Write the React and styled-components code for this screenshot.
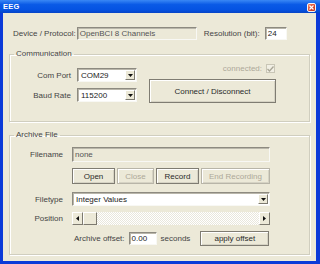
import styled, { createGlobalStyle } from "styled-components";

const Global = createGlobalStyle`
  html, body { margin: 0; padding: 0; background: #ffffff; }
  body { font-family: "Liberation Sans", Arial, sans-serif; }
  * { box-sizing: border-box; }
`;

const Window = styled.div`
  width: 320px;
  height: 264px;
  display: flex;
  flex-direction: column;
  background: #0b3ad8;
`;

const TitleBar = styled.div`
  flex: none;
  height: 13px;
  display: flex;
  align-items: center;
  justify-content: space-between;
  padding: 0 4px 0 3px;
  background: linear-gradient(#3a88f5, #0a5ae6 35%, #0553e2 75%, #0744c6);
  color: #ffffff;
  font-weight: bold;
  font-size: 7.5px;
  letter-spacing: 0.2px;
`;

const CloseBtn = styled.div`
  width: 9px;
  height: 9px;
  margin-top: 1px;
  border: 1px solid #f4f4f4;
  border-radius: 2px;
  background: linear-gradient(135deg, #f08a6c, #d9452a 55%, #c0361c);
  display: flex;
  align-items: center;
  justify-content: center;
`;

const Body = styled.div`
  flex: 1;
  margin: 0 4px 3px 3px;
  background: #ece9d8;
  padding: 14px 6px 0 6px;
  font-size: 8px;
  color: #333333;
`;

const TopRow = styled.div`
  display: flex;
  align-items: center;
  height: 13px;
  margin-left: 4px;
`;

const Label = styled.span`
  white-space: nowrap;
  color: ${(p) => (p.$muted ? "#aca899" : "#444444")};
  margin-right: ${(p) => p.$mr || 0}px;
  margin-left: ${(p) => p.$ml || 0}px;
`;

const TextBox = styled.div`
  width: ${(p) => p.$w}px;
  height: ${(p) => p.$h || 13}px;
  display: flex;
  align-items: center;
  padding-left: 2px;
  border: 1px solid;
  border-color: #8d8a80 #f8f8f4 #f8f8f4 #8d8a80;
  box-shadow: inset 1px 1px 0 #b9b6aa;
  background: ${(p) => (p.$disabled ? "#ece9d8" : "#ffffff")};
  color: ${(p) => (p.$disabled ? "#555555" : "#222222")};
  white-space: nowrap;
  overflow: hidden;
`;

const Group = styled.fieldset`
  margin: ${(p) => p.$mt}px 0 0 0;
  padding: ${(p) => p.$pad};
  border: 1px solid #d0cebf;
  box-shadow: 1px 1px 0 #ffffff, inset 1px 1px 0 #ffffff;
  min-width: 0;
`;

const Legend = styled.legend`
  margin-left: 4px;
  padding: 0 2px;
  font-size: 8px;
  line-height: 10px;
  color: #444444;
`;

const CommLayout = styled.div`
  display: flex;
  align-items: flex-start;
`;

const FormGrid = styled.div`
  display: grid;
  grid-template-columns: ${(p) => p.$cols};
  column-gap: ${(p) => p.$cg}px;
  row-gap: 6px;
  align-items: center;
  margin-top: ${(p) => p.$mt || 0}px;
`;

const RightLabel = styled.span`
  text-align: right;
  white-space: nowrap;
  color: #444444;
  margin-top: ${(p) => p.$mt || 0}px;
`;

const Select = styled.div`
  width: ${(p) => (p.$w ? `${p.$w}px` : "100%")};
  height: ${(p) => p.$h || 14}px;
  margin-top: ${(p) => p.$mt || 0}px;
  display: flex;
  align-items: stretch;
  border: 1px solid;
  border-color: #8d8a80 #f8f8f4 #f8f8f4 #8d8a80;
  box-shadow: inset 1px 1px 0 #b9b6aa;
  background: #ffffff;
  padding: 1px;
`;

const SelectText = styled.span`
  flex: 1;
  display: flex;
  align-items: center;
  padding-left: 2px;
  color: #222222;
  white-space: nowrap;
  overflow: hidden;
`;

const ArrowBtn = styled.div`
  width: ${(p) => p.$w || 10}px;
  flex: none;
  display: flex;
  align-items: center;
  justify-content: center;
  background: #ece9d8;
  border: 1px solid;
  border-color: #ffffff #7d7a70 #7d7a70 #ffffff;
`;

const RightCol = styled.div`
  width: 127px;
  margin-left: 12px;
  display: flex;
  flex-direction: column;
  align-items: flex-end;
`;

const ConnectedRow = styled.div`
  height: 9px;
  display: flex;
  align-items: center;
  gap: 4px;
  margin-right: 1px;
`;

const CheckBox = styled.div`
  width: 9px;
  height: 9px;
  border: 1px solid #c9c6b6;
  background: #f1efe4;
  display: flex;
  align-items: center;
  justify-content: center;
`;

const Button = styled.div`
  width: ${(p) => (p.$w ? `${p.$w}px` : "100%")};
  height: ${(p) => p.$h || 16}px;
  margin-top: ${(p) => p.$mt || 0}px;
  display: flex;
  align-items: center;
  justify-content: center;
  background: #ece9d8;
  border: 1px solid ${(p) => (p.$disabled ? "#b8b5a8" : "#7f7c72")};
  box-shadow: inset 1px 1px 0 #ffffff, inset -1px -1px 0 #d6d3c4;
  color: ${(p) => (p.$disabled ? "#aca899" : "#2a2a2a")};
  white-space: nowrap;
`;

const ButtonRow = styled.div`
  display: flex;
  gap: 2px;
`;

const Scrollbar = styled.div`
  height: 13px;
  display: flex;
  background-color: #f7f6f0;
  background-image: repeating-conic-gradient(#ffffff 0 25%, #e9e7dc 0 50%);
  background-size: 2px 2px;
`;

const ScrollPart = styled.div`
  width: ${(p) => p.$w}px;
  flex: none;
  margin-left: ${(p) => (p.$push ? "auto" : "0")};
  display: flex;
  align-items: center;
  justify-content: center;
  background: #ece9d8;
  border: 1px solid;
  border-color: #ffffff #7d7a70 #7d7a70 #ffffff;
`;

const OffsetRow = styled.div`
  display: flex;
  align-items: center;
  height: 14px;
  padding-left: 2px;
`;

const Down = () => (
  <svg width="5" height="3" viewBox="0 0 5 3">
    <path d="M0 0h5L2.5 3z" fill="#111" />
  </svg>
);

const Left = () => (
  <svg width="3" height="5" viewBox="0 0 3 5">
    <path d="M3 0v5L0 2.5z" fill="#111" />
  </svg>
);

const Right = () => (
  <svg width="3" height="5" viewBox="0 0 3 5">
    <path d="M0 0v5l3-2.5z" fill="#111" />
  </svg>
);

export default function App() {
  return (
    <>
      <Global />
      <Window>
        <TitleBar>
          <span>EEG</span>
          <CloseBtn>
            <svg width="5" height="5" viewBox="0 0 5 5">
              <path d="M0.5 0.5l4 4M4.5 0.5l-4 4" stroke="#fff" strokeWidth="1.2" />
            </svg>
          </CloseBtn>
        </TitleBar>
        <Body>
          <TopRow>
            <Label $mr={1}>Device / Protocol:</Label>
            <TextBox $w={120} $disabled>OpenBCI 8 Channels</TextBox>
            <Label $ml={7} $mr={5}>Resolution (bit):</Label>
            <TextBox $w={22}>24</TextBox>
          </TopRow>

          <Group $mt={9} $pad="5px 0 18px 0">
            <Legend>Communication</Legend>
            <CommLayout>
              <FormGrid $cols="61px 60px" $cg={6} $mt={4}>
                <RightLabel>Com Port</RightLabel>
                <Select>
                  <SelectText>COM29</SelectText>
                  <ArrowBtn><Down /></ArrowBtn>
                </Select>
                <RightLabel>Baud Rate</RightLabel>
                <Select>
                  <SelectText>115200</SelectText>
                  <ArrowBtn><Down /></ArrowBtn>
                </Select>
              </FormGrid>
              <RightCol>
                <ConnectedRow>
                  <Label $muted>connected:</Label>
                  <CheckBox>
                    <svg width="7" height="6" viewBox="0 0 7 6">
                      <path d="M0.5 3l2 2 4-4.5" stroke="#a9a696" strokeWidth="1.3" fill="none" />
                    </svg>
                  </CheckBox>
                </ConnectedRow>
                <Button $h={24} $mt={6}>Connect / Disconnect</Button>
              </RightCol>
            </CommLayout>
          </Group>

          <Group $mt={8} $pad="7px 0 9px 0">
            <Legend>Archive File</Legend>
            <FormGrid $cols="53px 198px" $cg={9}>
              <RightLabel>Filename</RightLabel>
              <TextBox $w={198} $h={15} $disabled>none</TextBox>

              <span />
              <ButtonRow>
                <Button $w={43}>Open</Button>
                <Button $w={37} $disabled>Close</Button>
                <Button $w={43}>Record</Button>
                <Button $w={69} $disabled>End Recording</Button>
              </ButtonRow>

              <RightLabel $mt={2}>Filetype</RightLabel>
              <Select $h={14} $mt={2}>
                <SelectText>Integer Values</SelectText>
                <ArrowBtn><Down /></ArrowBtn>
              </Select>

              <RightLabel>Position</RightLabel>
              <Scrollbar>
                <ScrollPart $w={11}><Left /></ScrollPart>
                <ScrollPart $w={14} />
                <ScrollPart $w={11} $push><Right /></ScrollPart>
              </Scrollbar>

              <span />
              <OffsetRow>
                <Label $mr={4}>Archive offset:</Label>
                <TextBox $w={28}>0.00</TextBox>
                <Label $ml={4} $mr={10}>seconds</Label>
                <Button $w={69} $h={15}>apply offset</Button>
              </OffsetRow>
            </FormGrid>
          </Group>
        </Body>
      </Window>
    </>
  );
}
